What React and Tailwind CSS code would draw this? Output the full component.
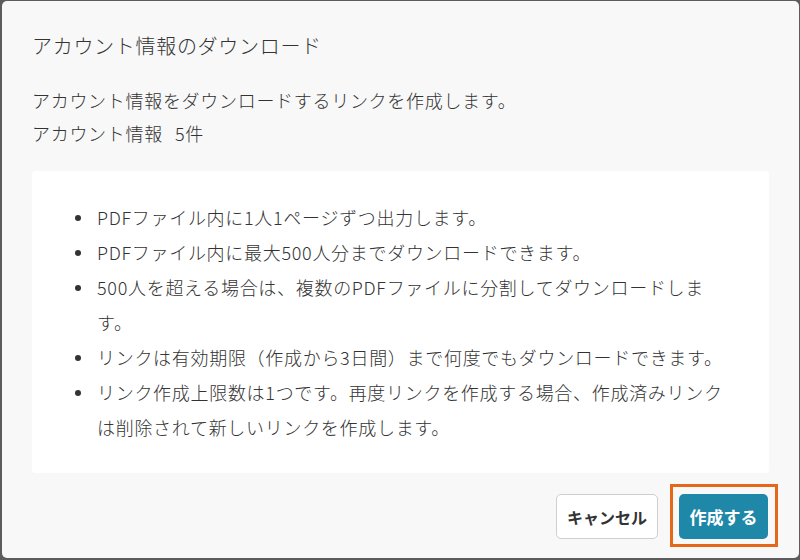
const notes = [
  ["PDFファイル内に1人1ページずつ出力します。"],
  ["PDFファイル内に最大500人分までダウンロードできます。"],
  ["500人を超える場合は、複数のPDFファイルに分割してダウンロードしま", "す。"],
  ["リンクは有効期限（作成から3日間）まで何度でもダウンロードできます。"],
  ["リンク作成上限数は1つです。再度リンクを作成する場合、作成済みリンク", "は削除されて新しいリンクを作成します。"],
];

const App = () => {
  return (
    <div
      className="w-[800px] h-[560px] bg-[#5c5c5c] pt-[1px] pr-[1px] pb-[2px] pl-[2px]"
      style={{ fontFamily: '"Noto Sans CJK JP", "Noto Sans", sans-serif' }}
    >
      <div className="h-full rounded-[5px] bg-[#f8f8f8] pl-[30px] pr-[30px] pt-[31px] text-[#333]">
        <h2 className="text-[20px] leading-[28px] font-light tracking-[0.7px]">アカウント情報のダウンロード</h2>

        <div className="mt-[24px] text-[18px] leading-[33px] font-light tracking-[0.7px]">
          <p>アカウント情報をダウンロードするリンクを作成します。</p>
          <p>
            アカウント情報<span className="ml-[12px]">5件</span>
          </p>
        </div>

        <div className="mt-[21px] h-[302px] rounded-[4px] bg-white pl-[43px] pr-[30px] pt-[29px]">
          <ul className="text-[18px] leading-[35px] font-light tracking-[0.7px]">
            {notes.map((lines, i) => (
              <li key={i} className="flex">
                <span className="flex h-[35px] w-[22px] shrink-0 items-center">
                  <span className="h-[6px] w-[6px] rounded-full bg-[#333]"></span>
                </span>
                <span className="whitespace-nowrap">
                  {lines.map((l, j) => (
                    <span key={j} className="block">{l}</span>
                  ))}
                </span>
              </li>
            ))}
          </ul>
        </div>

        {/* footer buttons */}
        <div className="mt-[21px] flex justify-end gap-[21px] pr-[1px]">
          <button className="h-[45px] rounded-[5px] border border-[#cfcfcf] bg-white px-[10px] text-[16px] font-bold text-[#333]">
            キャンセル
          </button>
          <div className="relative">
            <button className="h-[45px] w-[89px] rounded-[5px] bg-[#1f87a7] text-[17px] font-bold text-white">
              作成する
            </button>
            <span className="pointer-events-none absolute -top-[10px] -bottom-[8px] -left-[9px] -right-[10px] border-[3px] border-[#e5681a]"></span>
          </div>
        </div>
      </div>
    </div>
  );
};

export default App;
